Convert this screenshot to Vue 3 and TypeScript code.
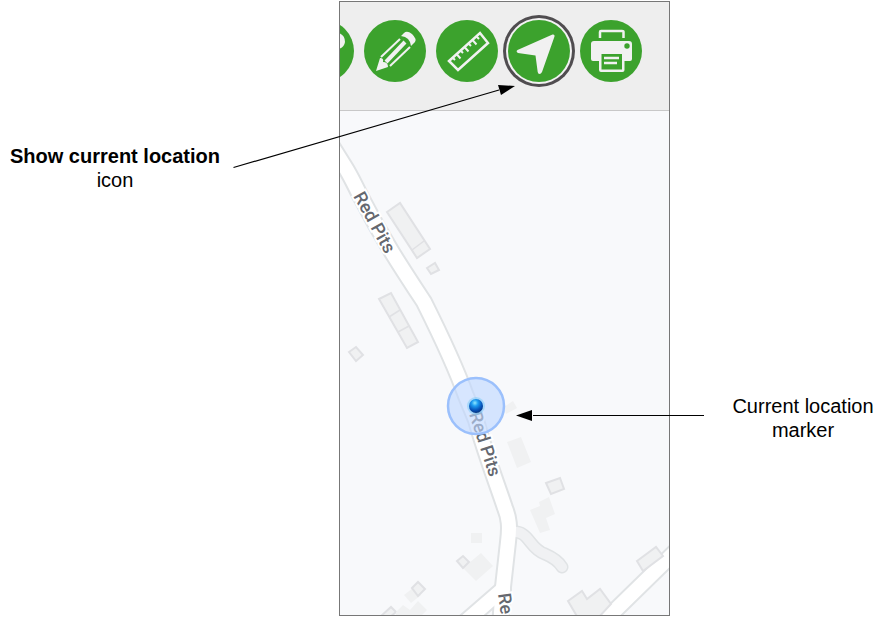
<script setup lang="ts">
interface Tool {
  id: string
  label: string
  active?: boolean
}

interface Building {
  points: string
  outlined: boolean
}

const tools: Tool[] = [
  { id: 'place', label: 'Place' },
  { id: 'draw', label: 'Draw' },
  { id: 'measure', label: 'Measure' },
  { id: 'locate', label: 'Show current location', active: true },
  { id: 'print', label: 'Print' },
]

const buildings: Building[] = [
  { points: '387,212 400,203 430,249 417,258', outlined: true },
  { points: '427,268 435,263 439,270 431,274', outlined: true },
  { points: '379,299 391,293 418,342 407,348', outlined: true },
  { points: '349,352 356,347 363,355 356,361', outlined: true },
  { points: '504,407 513,401 517,408 506,414', outlined: false },
  { points: '507,442 521,437 531,462 517,468', outlined: false },
  { points: '546,483 560,478 564,489 551,494', outlined: true },
  { points: '530,510 540,506 539,502 549,497 555,514 546,518 550,530 540,533', outlined: false },
  { points: '471,533 482,533 482,543 471,543', outlined: false },
  { points: '463,568 481,553 493,566 476,581', outlined: false },
  { points: '457,561 463,556 469,562 463,568', outlined: true },
  { points: '404,595 413,588 421,595 411,603', outlined: false },
  { points: '412,588 418,582 425,589 418,596', outlined: true },
  { points: '380,617 391,607 396,612 390,617', outlined: true },
  { points: '396,612 403,605 410,610 418,601 427,610 420,617 396,617', outlined: false },
  { points: '637,561 656,547 663,556 643,571', outlined: true },
  { points: '568,601 582,591 587,599 600,589 611,604 598,618 578,618', outlined: true },
]

const buildingDividers = 'M412 250L424 241M389 317L400 310M398 332L409 326'
const mainRoad = 'M330 143L345 167C352 178 356 188 362 199C383 240 403 270 424 302C444 342 456 368 466 396L476 420C484 450 497 484 505 508C509 518 510 526 508 542L502 596L500 630'
const sideRoad = 'M503 589L465 622'
const lowerRoad = 'M595 630L680 547'
const track = 'M511 532C530 530 528 548 545 554C552 557 559 562 562 567'
</script>

<template>
  <main class="figure">
    <p class="callout callout-icon"><strong>Show current location</strong><br />icon</p>

    <section class="panel" aria-label="Map">
      <div class="toolbar">
        <button
          v-for="tool in tools"
          :key="tool.id"
          type="button"
          class="tool"
          :class="{ active: tool.active }"
          :aria-label="tool.label"
        >
          <svg v-if="tool.id === 'place'" viewBox="0 0 62 62" fill="#f1f1f1">
            <path d="M31 54L24 25Q23 12 40 12Q53 12 53 22Q52 29 44 29L38 28Z" />
          </svg>
          <svg v-else-if="tool.id === 'draw'" viewBox="0 0 62 62" fill="#f1f1f1">
            <path d="M37 16L40 13Q43 10 48 14Q53 19 51 22L47 26Q46 17 37 16Z" />
            <path d="M12 51L16 38Q20 38 19 42Q24 42 24 47Z" />
            <g fill="none" stroke="#f1f1f1">
              <path d="M17 37L36 19" stroke-width="2" />
              <path d="M22 42L41 22" stroke-width="4" />
              <path d="M26 46L46 27" stroke-width="2" />
            </g>
          </svg>
          <svg v-else-if="tool.id === 'measure'" viewBox="0 0 62 62" fill="none" stroke="#f1f1f1">
            <path d="M13 41L44 13L52 23L22 50Z" stroke-width="2.5" />
            <path d="M16.500 37.500L19 40M20.500 34L24.500 38.500M24.500 30.500L27 33M28.500 27L32.500 31.500M32.500 23.500L35 26M36.500 20L40.500 24.500M40.500 16.500L43 19" stroke-width="2" />
          </svg>
          <svg v-else-if="tool.id === 'locate'" viewBox="0 0 62 62" fill="#f1f1f1">
            <path d="M9.500 30L44.500 14.500Q47 14 46.500 16.500L34 52Q33 54 31.500 54Q30 54 29.700 52L27.500 35.500L10 33Q7.500 31.500 9.500 30Z" />
          </svg>
          <svg v-else viewBox="0 0 62 62">
            <path d="M20 18V12Q20 11 21 11H42Q43.500 11 43.500 12V18" fill="none" stroke="#f1f1f1" stroke-width="2.5" />
            <path d="M14 21H49Q52 21 52 24V39Q52 41 50 41H44.500V50Q44.500 52 42.500 52H21Q19 52 19 50V41H13Q11 41 11 39V24Q11 21 14 21Z" fill="#f1f1f1" />
            <path d="M21.500 34H42V49.500H21.500Z" fill="#3ca22d" />
            <path d="M24 38H39M24 43H37" stroke="#f1f1f1" stroke-width="2.5" />
            <circle cx="47" cy="26" r="2.7" fill="#3ca22d" />
          </svg>
        </button>
      </div>

      <svg class="map" viewBox="340 111 329 504" preserveAspectRatio="xMidYMid slice" role="img" aria-label="Street map of Red Pits">
        <defs>
          <radialGradient id="marker-fill" cx="0.42" cy="0.28" r="0.75">
            <stop offset="0" stop-color="#8fe8ff" />
            <stop offset="0.3" stop-color="#1e9cf0" />
            <stop offset="0.7" stop-color="#0752b8" />
            <stop offset="1" stop-color="#052f78" />
          </radialGradient>
        </defs>
        <g fill="none" stroke-linecap="round" stroke-linejoin="round">
          <g stroke="#e0e3e5">
            <path :d="track" stroke-width="13" />
            <path :d="sideRoad" stroke-width="18" />
            <path :d="lowerRoad" stroke-width="18" />
            <path :d="mainRoad" stroke-width="18" />
          </g>
          <path :d="track" stroke="#f0f1f3" stroke-width="10" />
          <g stroke="#fff">
            <path :d="sideRoad" stroke-width="14" />
            <path :d="lowerRoad" stroke-width="14" />
            <path :d="mainRoad" stroke-width="14" />
          </g>
        </g>
        <polygon
          v-for="building in buildings"
          :key="building.points"
          :points="building.points"
          class="building"
          :class="{ outlined: building.outlined }"
        />
        <path :d="buildingDividers" stroke="#e0e1e4" stroke-width="1.5" />
        <g class="street">
          <text transform="translate(353 196) rotate(61)">Red Pits</text>
          <text transform="translate(469 414) rotate(72)">Red Pits</text>
          <text transform="translate(498 594) rotate(82)">Re</text>
        </g>
        <circle cx="476" cy="406" r="28" fill="#bfd7ff" fill-opacity="0.62" stroke="#9bc0fc" stroke-width="2.5" />
        <circle cx="476" cy="406" r="9" fill="#79c9f5" fill-opacity="0.5" />
        <circle cx="476" cy="406" r="7" fill="url(#marker-fill)" />
      </svg>

      <svg class="pointer" viewBox="0 0 370 617" aria-hidden="true">
        <path d="M0.500 167.500L266 90M300 415.500H471" fill="none" stroke="#000" stroke-width="1.200" />
        <path d="M282 86L268 95L265 85Z" />
        <path d="M283 415.500L299 410V421Z" />
      </svg>
    </section>

    <p class="callout callout-marker">Current location<br />marker</p>
  </main>
</template>

<style>
body {
  margin: 0;
  background: #fff;
}
</style>

<style scoped>
.figure {
  display: grid;
  grid-template-columns: 339fr 331px 220fr;
  align-items: start;
  color: #000;
  font-family: "Liberation Sans", Arial, sans-serif;
  font-size: 20px;
  line-height: 24px;
}

.callout {
  margin: 0;
  text-align: center;
}

.callout-icon {
  padding: 144px 109px 0 0;
  white-space: nowrap;
}

.callout-marker {
  padding: 394px 0 0 46px;
}

.panel {
  position: relative;
  margin: 1px 0;
  border: 1px solid #777;
  background: #f8f9fb;
}

.toolbar {
  display: flex;
  gap: 10px;
  padding: 18px 0 28px;
  overflow: hidden;
  background: #eee;
  border-bottom: 1px solid #c8c8c8;
}

.tool {
  flex: none;
  width: 62px;
  height: 62px;
  padding: 0;
  border: 0;
  border-radius: 50%;
  background: #3ca22d;
}

.tool:first-child {
  margin-left: -48px;
}

.tool.active {
  box-shadow: 0 0 0 2px #f3f3f3, 0 0 0 5px #504d50;
}

.tool svg {
  display: block;
}

.map {
  display: block;
  width: 100%;
  height: auto;
}

.building {
  fill: #f0f1f2;
}

.building.outlined {
  stroke: #e0e1e4;
  stroke-width: 2;
}

.street {
  fill: #65686f;
  stroke: #fff;
  stroke-width: 4;
  paint-order: stroke;
  font-family: Roboto, sans-serif;
  font-size: 18px;
  font-weight: 500;
}

.pointer {
  position: absolute;
  top: -2px;
  left: -107px;
  width: 370px;
  overflow: visible;
  pointer-events: none;
}
</style>
